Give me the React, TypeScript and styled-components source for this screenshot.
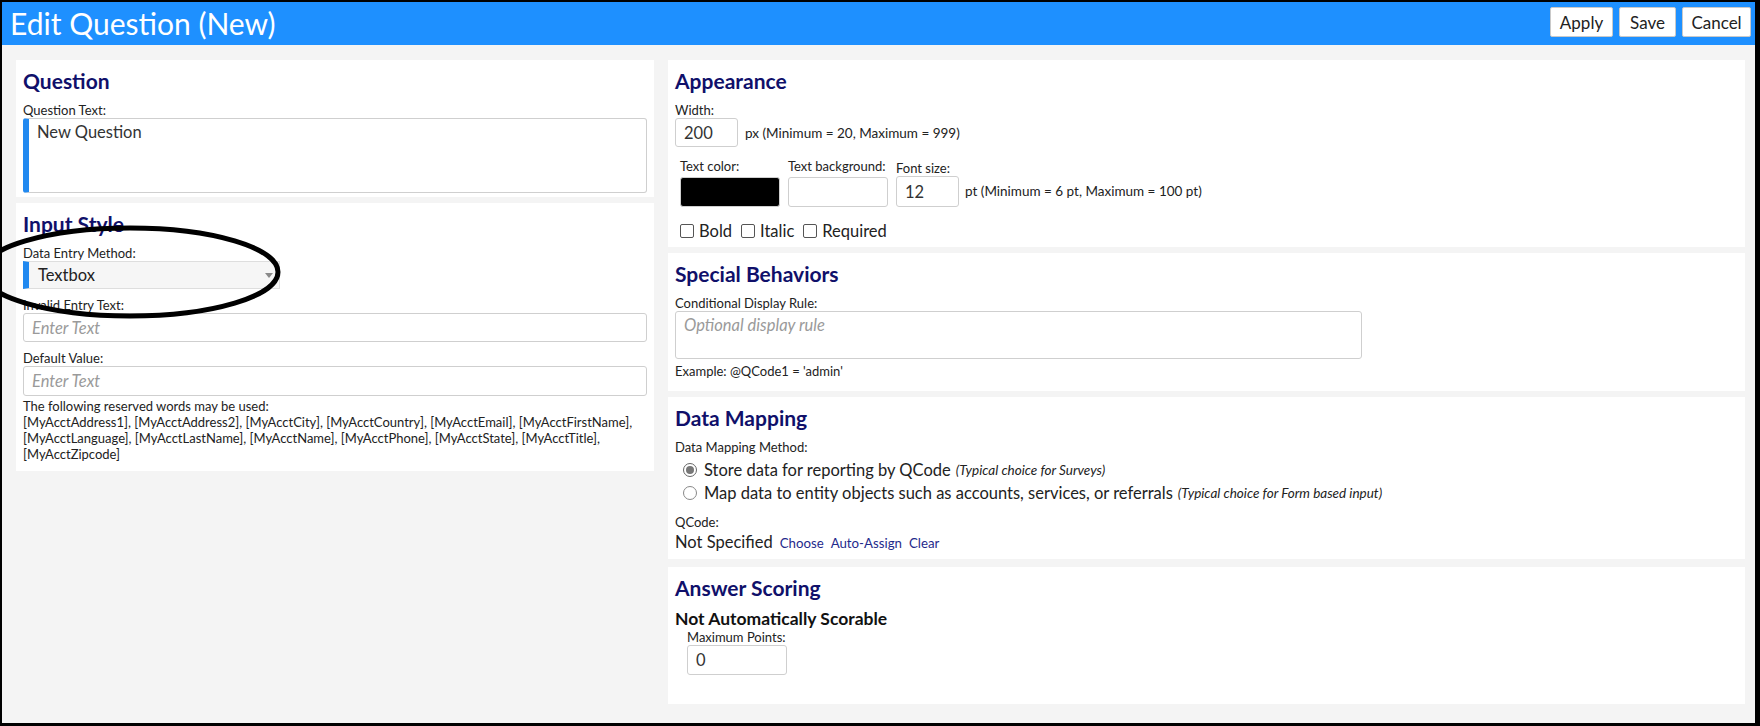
import React from 'react';
import styled, { createGlobalStyle } from 'styled-components';

const GlobalStyle = createGlobalStyle`
    html, body {
        margin: 0;
        padding: 0;
        background: #ffffff;
    }
    body {
        font-family: Lato, 'Open Sans', sans-serif;
        color: #222;
    }
    * {
        box-sizing: border-box;
    }
`;

const RESERVED_LINES = [
    '[MyAcctAddress1], [MyAcctAddress2], [MyAcctCity], [MyAcctCountry], [MyAcctEmail], [MyAcctFirstName],',
    '[MyAcctLanguage], [MyAcctLastName], [MyAcctName], [MyAcctPhone], [MyAcctState], [MyAcctTitle],',
    '[MyAcctZipcode]',
];

const CheckItem = ({ label }: { label: string }) => (
    <CheckLabel>
        <CheckBox />
        {label}
    </CheckLabel>
);

const RadioItem = ({ label, note, checked }: { label: string; note: string; checked?: boolean }) => (
    <RadioRow>
        <RadioDot $checked={checked} />
        <span>{label}</span>
        <Note>{note}</Note>
    </RadioRow>
);

export default function App() {
    return (
        <>
            <GlobalStyle />
            <Frame>
                <Header>
                    <Title>Edit Question (New)</Title>
                    <ButtonBar>
                        <HeaderButton $w={63}>Apply</HeaderButton>
                        <HeaderButton $w={57}>Save</HeaderButton>
                        <HeaderButton $w={69}>Cancel</HeaderButton>
                    </ButtonBar>
                </Header>

                <Body>
                    <LeftColumn>
                        <Panel $pb={4}>
                            <Heading>Question</Heading>
                            <Label>Question Text:</Label>
                            <TextArea $marked $h={75} defaultValue="New Question" readOnly />
                        </Panel>

                        <Panel $pb={9}>
                            <Heading>Input Style</Heading>
                            <Label>Data Entry Method:</Label>
                            <SelectBox>
                                Textbox
                                <Caret />
                            </SelectBox>
                            <Label $mt={8}>Invalid Entry Text:</Label>
                            <TextInput $h={29} placeholder="Enter Text" readOnly />
                            <Label $mt={8}>Default Value:</Label>
                            <TextInput $h={30} placeholder="Enter Text" readOnly />
                            <Reserved>
                                The following reserved words may be used:
                                {RESERVED_LINES.map((line) => (
                                    <div key={line}>{line}</div>
                                ))}
                            </Reserved>
                        </Panel>
                    </LeftColumn>

                    <RightColumn>
                        <Panel $pb={6}>
                            <Heading>Appearance</Heading>
                            <Label>Width:</Label>
                            <InlineRow>
                                <NumberBox $w={63} $h={29} defaultValue="200" readOnly />
                                <Hint>px (Minimum = 20, Maximum = 999)</Hint>
                            </InlineRow>
                            <ColorRow>
                                <Cell>
                                    <CellLabel>Text color:</CellLabel>
                                    <Swatch $bg="#000000" />
                                </Cell>
                                <Cell>
                                    <CellLabel>Text background:</CellLabel>
                                    <Swatch $bg="#ffffff" />
                                </Cell>
                                <Cell>
                                    <CellLabel $gap={0}>Font size:</CellLabel>
                                    <NumberBox $w={63} $h={31} defaultValue="12" readOnly />
                                </Cell>
                                <RowHint>pt (Minimum = 6 pt, Maximum = 100 pt)</RowHint>
                            </ColorRow>
                            <CheckRow>
                                <CheckItem label="Bold" />
                                <CheckItem label="Italic" />
                                <CheckItem label="Required" />
                            </CheckRow>
                        </Panel>

                        <Panel $pb={12}>
                            <Heading>Special Behaviors</Heading>
                            <Label>Conditional Display Rule:</Label>
                            <TextArea $h={48} $w={687} placeholder="Optional display rule" readOnly />
                            <Label $mt={4}>Example: @QCode1 = 'admin'</Label>
                        </Panel>

                        <Panel $pb={5}>
                            <Heading>Data Mapping</Heading>
                            <Label>Data Mapping Method:</Label>
                            <RadioGroup>
                                <RadioItem
                                    checked
                                    label="Store data for reporting by QCode"
                                    note="(Typical choice for Surveys)"
                                />
                                <RadioItem
                                    label="Map data to entity objects such as accounts, services, or referrals"
                                    note="(Typical choice for Form based input)"
                                />
                            </RadioGroup>
                            <Label $mt={10}>QCode:</Label>
                            <QCodeRow>
                                <span>Not Specified</span>
                                <LinkText>Choose</LinkText>
                                <LinkText>Auto-Assign</LinkText>
                                <LinkText>Clear</LinkText>
                            </QCodeRow>
                        </Panel>

                        <Panel $pb={29} $mt={2}>
                            <Heading>Answer Scoring</Heading>
                            <ScoreTitle>Not Automatically Scorable</ScoreTitle>
                            <ScoreBlock>
                                <Label>Maximum Points:</Label>
                                <NumberBox $w={100} $h={30} defaultValue="0" readOnly />
                            </ScoreBlock>
                        </Panel>
                    </RightColumn>
                </Body>

                <Annotation viewBox="0 0 1760 726" aria-hidden="true">
                    <ellipse
                        cx="130"
                        cy="272"
                        rx="148"
                        ry="44"
                        fill="none"
                        stroke="#000"
                        strokeWidth="5"
                    />
                </Annotation>
            </Frame>
        </>
    );
}

const Frame = styled.div`
    position: relative;
    width: 1760px;
    height: 726px;
    overflow: hidden;
    background: #f4f4f4;
    border-style: solid;
    border-color: #000;
    border-width: 2px 5px 3px 2px;
`;

const Header = styled.header`
    display: flex;
    justify-content: space-between;
    height: 43px;
    padding: 0 4px 0 8px;
    background: #1e90ff;
`;

const Title = styled.h1`
    margin: 0;
    font-size: 30px;
    font-weight: 400;
    line-height: 43px;
    color: #ffffff;
`;

const ButtonBar = styled.div`
    display: flex;
    gap: 6px;
    padding-top: 5px;
`;

const HeaderButton = styled.button<{ $w: number }>`
    width: ${(p) => p.$w}px;
    height: 30px;
    padding: 0;
    border: 1px solid #c9c9c9;
    border-radius: 2px;
    background: #ffffff;
    color: #222;
    font-family: Lato, 'Open Sans', sans-serif;
    font-size: 17px;
`;

const Body = styled.main`
    display: flex;
    gap: 14px;
    padding: 15px 10px 0 14px;
`;

const LeftColumn = styled.div`
    display: flex;
    flex-direction: column;
    gap: 6px;
    width: 638px;
    flex-shrink: 0;
`;

const RightColumn = styled.div`
    display: flex;
    flex-direction: column;
    gap: 6px;
    flex: 1;
`;

const Panel = styled.section<{ $pb: number; $mt?: number }>`
    background: #ffffff;
    padding: 9px 7px ${(p) => p.$pb}px;
    margin-top: ${(p) => p.$mt ?? 0}px;
`;

const Heading = styled.h2`
    margin: 0 0 9px;
    font-size: 21px;
    font-weight: 700;
    line-height: 24px;
    color: #10106a;
`;

const Label = styled.div<{ $mt?: number }>`
    margin-top: ${(p) => p.$mt ?? 0}px;
    font-size: 13px;
    line-height: 16px;
    color: #222;
    white-space: nowrap;
`;

const fieldBase = `
    display: block;
    border: 1px solid #cfcfcf;
    border-radius: 3px;
    background: #ffffff;
    font-family: Lato, 'Open Sans', sans-serif;
    font-size: 16.5px;
    color: #333;
    outline: none;
    &::placeholder {
        font-style: italic;
        color: #9a9a9a;
    }
`;

const TextArea = styled.textarea<{ $h: number; $w?: number; $marked?: boolean }>`
    ${fieldBase}
    width: ${(p) => (p.$w ? `${p.$w}px` : '100%')};
    height: ${(p) => p.$h}px;
    padding: 3px 8px;
    line-height: 20px;
    resize: none;
    border-left: ${(p) => (p.$marked ? '6px solid #2189f0' : '1px solid #cfcfcf')};
`;

const TextInput = styled.input<{ $h: number }>`
    ${fieldBase}
    width: 100%;
    height: ${(p) => p.$h}px;
    padding: 0 8px;
`;

const NumberBox = styled.input<{ $w: number; $h: number }>`
    ${fieldBase}
    width: ${(p) => p.$w}px;
    height: ${(p) => p.$h}px;
    padding: 0 8px;
`;

const SelectBox = styled.div`
    position: relative;
    display: flex;
    align-items: center;
    width: 257px;
    height: 28px;
    padding-left: 9px;
    border: 1px solid #dedede;
    border-left: 6px solid #2189f0;
    background: #f6f6f6;
    font-size: 16.5px;
    color: #222;
`;

const Caret = styled.span`
    position: absolute;
    right: 6px;
    top: 11px;
    border-left: 4px solid transparent;
    border-right: 4px solid transparent;
    border-top: 5px solid #8a8a8a;
`;

const Reserved = styled.div`
    margin-top: 2px;
    font-size: 13px;
    line-height: 16px;
    color: #222;
    white-space: nowrap;
`;

const InlineRow = styled.div`
    display: flex;
    align-items: center;
    gap: 7px;
`;

const Hint = styled.span`
    font-size: 13.5px;
    color: #222;
`;

const ColorRow = styled.div`
    display: flex;
    align-items: flex-end;
    gap: 8px;
    margin-top: 11px;
    padding-left: 5px;
`;

const Cell = styled.div`
    display: flex;
    flex-direction: column;
`;

const CellLabel = styled.div<{ $gap?: number }>`
    margin-bottom: ${(p) => p.$gap ?? 3}px;
    font-size: 13px;
    line-height: 16px;
    white-space: nowrap;
`;

const Swatch = styled.div<{ $bg: string }>`
    width: 100px;
    height: 30px;
    border: 1px solid #cfcfcf;
    border-radius: 3px;
    background: ${(p) => p.$bg};
`;

const RowHint = styled.span`
    margin: 0 0 8px -2px;
    font-size: 13.5px;
    line-height: 16px;
`;

const CheckRow = styled.div`
    display: flex;
    gap: 9px;
    margin-top: 14px;
    padding-left: 5px;
    font-size: 16.5px;
    line-height: 20px;
`;

const CheckLabel = styled.label`
    display: flex;
    align-items: center;
    gap: 5px;
`;

const CheckBox = styled.span`
    width: 14px;
    height: 14px;
    border: 1px solid #555;
    border-radius: 2px;
    background: #ffffff;
`;

const RadioGroup = styled.div`
    margin-top: 3px;
    padding-left: 8px;
`;

const RadioRow = styled.div`
    display: flex;
    align-items: center;
    height: 23px;
    font-size: 16.5px;
    white-space: nowrap;
`;

const RadioDot = styled.span<{ $checked?: boolean }>`
    position: relative;
    width: 14px;
    height: 14px;
    margin-right: 7px;
    border: 1px solid ${(p) => (p.$checked ? '#666' : '#888')};
    border-radius: 50%;
    background: #ffffff;
    &::after {
        content: '';
        display: ${(p) => (p.$checked ? 'block' : 'none')};
        position: absolute;
        left: 2px;
        top: 2px;
        width: 8px;
        height: 8px;
        border-radius: 50%;
        background: #777;
    }
`;

const Note = styled.i`
    margin-left: 5px;
    font-size: 13.5px;
    color: #222;
`;

const QCodeRow = styled.div`
    display: flex;
    align-items: baseline;
    gap: 7px;
    margin-top: 1px;
    font-size: 16.5px;
    line-height: 22px;
`;

const LinkText = styled.a`
    font-size: 13.25px;
    color: #1f2a8c;
    cursor: pointer;
`;

const ScoreTitle = styled.div`
    font-size: 17.5px;
    font-weight: 700;
    line-height: 20px;
    color: #111;
`;

const ScoreBlock = styled.div`
    padding-left: 12px;
`;

const Annotation = styled.svg`
    position: absolute;
    left: -2px;
    top: -2px;
    width: 1760px;
    height: 726px;
    pointer-events: none;
`;
